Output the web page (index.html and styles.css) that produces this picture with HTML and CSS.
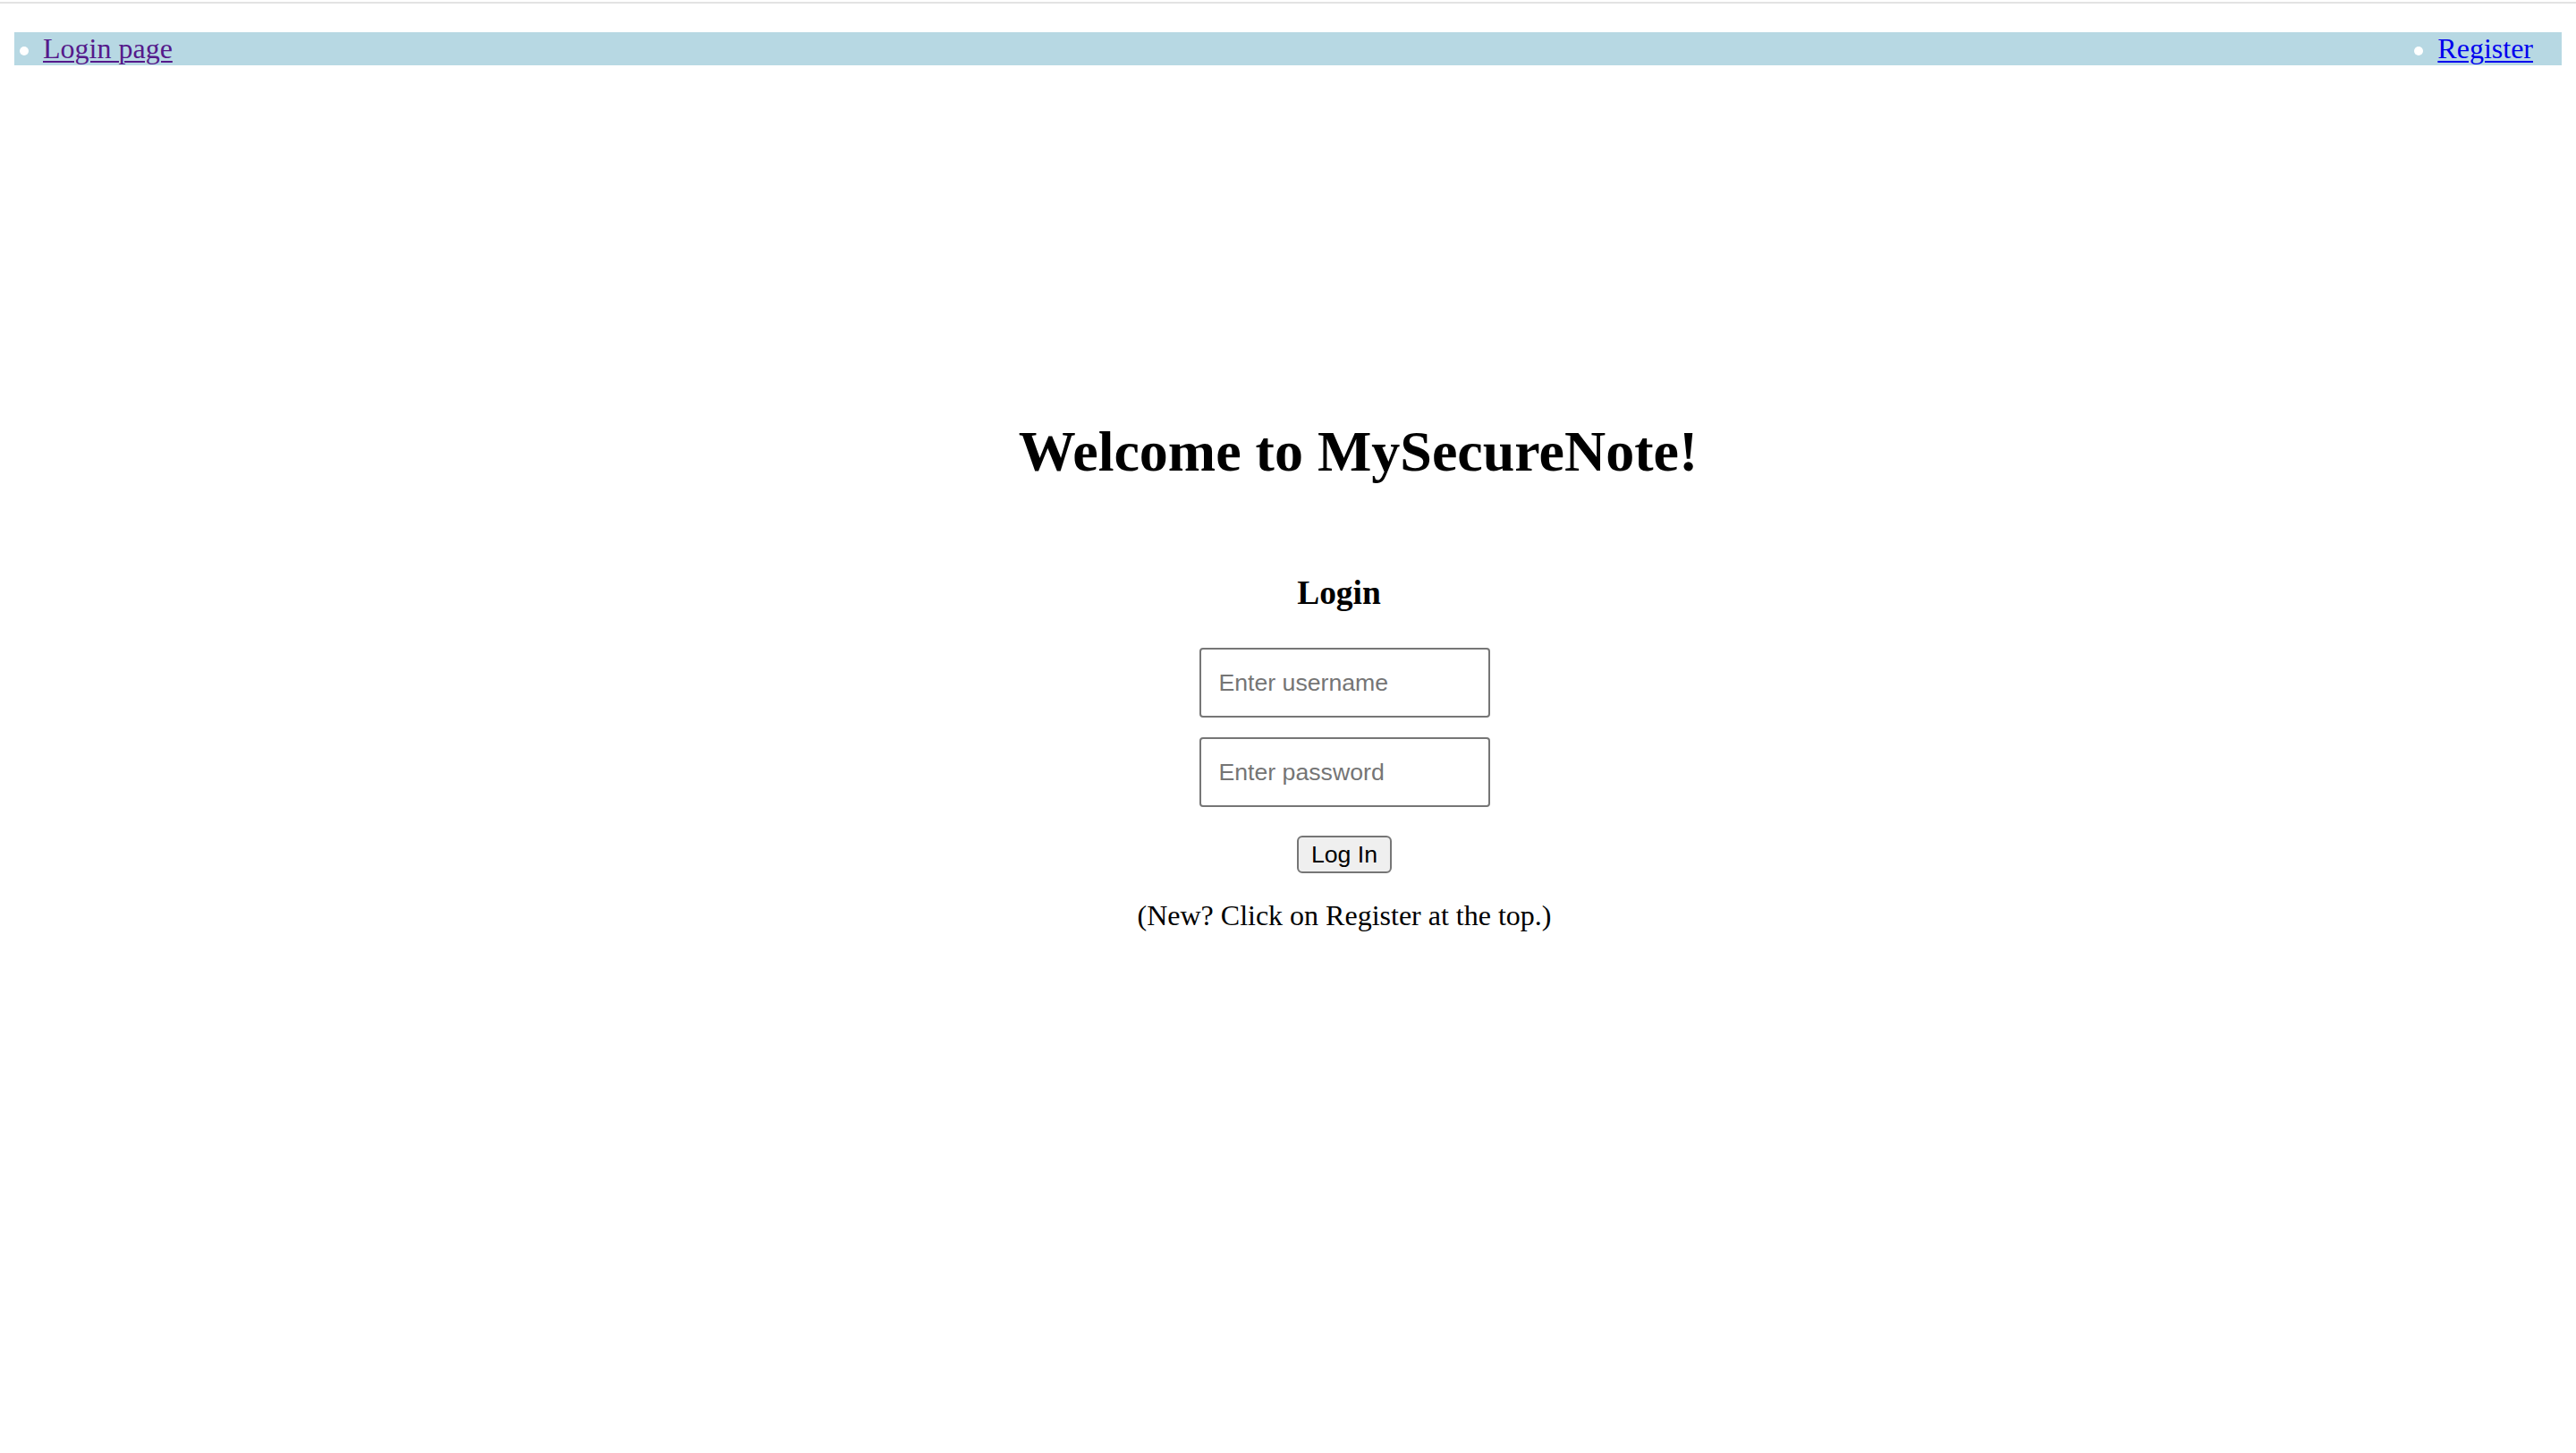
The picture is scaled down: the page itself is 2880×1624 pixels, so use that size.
FILE: index.html
```html
<!DOCTYPE html>
<html lang="en">
<head>
<meta charset="utf-8">
<title>MySecureNote</title>
<link rel="stylesheet" href="styles.css">
</head>
<body>
<div class="topline"></div>
<nav>
  <ul class="nav">
    <li class="nav-item"><a class="nav-link visited" href="#">Login page</a></li>
    <li class="nav-item"><a class="nav-link" href="#">Register</a></li>
  </ul>
</nav>
<main class="main">
  <h1 class="title">Welcome to MySecureNote!</h1>
  <h3 class="subtitle">Login</h3>
  <form class="login-form" onsubmit="return false">
    <input class="field first" type="text" placeholder="Enter username">
    <input class="field second" type="password" placeholder="Enter password">
    <button class="submit" type="submit">Log In</button>
  </form>
  <p class="hint">(New? Click on Register at the top.)</p>
</main>
</body>
</html>
```
FILE: styles.css
```css
html, body {
  background: #fff;
}
body {
  margin: 0;
  font-family: "Liberation Serif", "Times New Roman", serif;
  font-size: 32px;
  color: #000;
}
.topline {
  height: 2px;
  margin-top: 2px;
  background: #e3e3e3;
}
.nav {
  list-style: none;
  margin: 32px 16px 0;
  padding: 0 32px 0 6px;
  height: 37px;
  line-height: 37px;
  background: #b7d8e3;
  display: flex;
  justify-content: space-between;
}
.nav-item {
  display: flex;
  align-items: center;
  gap: 16px;
}
.nav-item::before {
  content: "";
  width: 10px;
  height: 10px;
  margin-top: 4px;
  border-radius: 50%;
  background: #fff;
}
.nav-link {
  color: #0000ee;
  text-decoration: underline;
  text-decoration-thickness: 2px;
  text-underline-offset: 3px;
}
.nav-link.visited {
  color: #551a8b;
}
.main {
  margin: 0 16px;
  padding-left: 126px;
  display: flex;
  flex-direction: column;
  align-items: center;
}
.title {
  margin: 396px 0 0;
  padding-left: 31px;
  font-size: 64px;
  line-height: 71px;
  font-weight: bold;
}
.subtitle {
  margin: 102px 0 0;
  padding-right: 12px;
  font-size: 37.44px;
  line-height: 41px;
  font-weight: bold;
}
.login-form {
  display: flex;
  flex-direction: column;
  align-items: center;
}
.field {
  box-sizing: border-box;
  width: 325px;
  height: 78px;
  margin: 0;
  padding: 0 20px;
  border: 2px solid #767676;
  border-radius: 4px;
  font-family: "Liberation Sans", Arial, sans-serif;
  font-size: 26.67px;
  color: #000;
  background: #fff;
  outline: none;
}
.field::placeholder {
  color: #757575;
}
.field.first {
  margin-top: 41px;
}
.field.second {
  margin-top: 22px;
}
.submit {
  box-sizing: border-box;
  height: 42px;
  margin-top: 32px;
  padding: 0 13.5px;
  border: 2px solid #767676;
  border-radius: 6px;
  background: #efefef;
  color: #000;
  font-family: "Liberation Sans", Arial, sans-serif;
  font-size: 26.67px;
  line-height: 36px;
}
.hint {
  margin: 30px 0 0;
  font-size: 32px;
  line-height: 35px;
}
```
